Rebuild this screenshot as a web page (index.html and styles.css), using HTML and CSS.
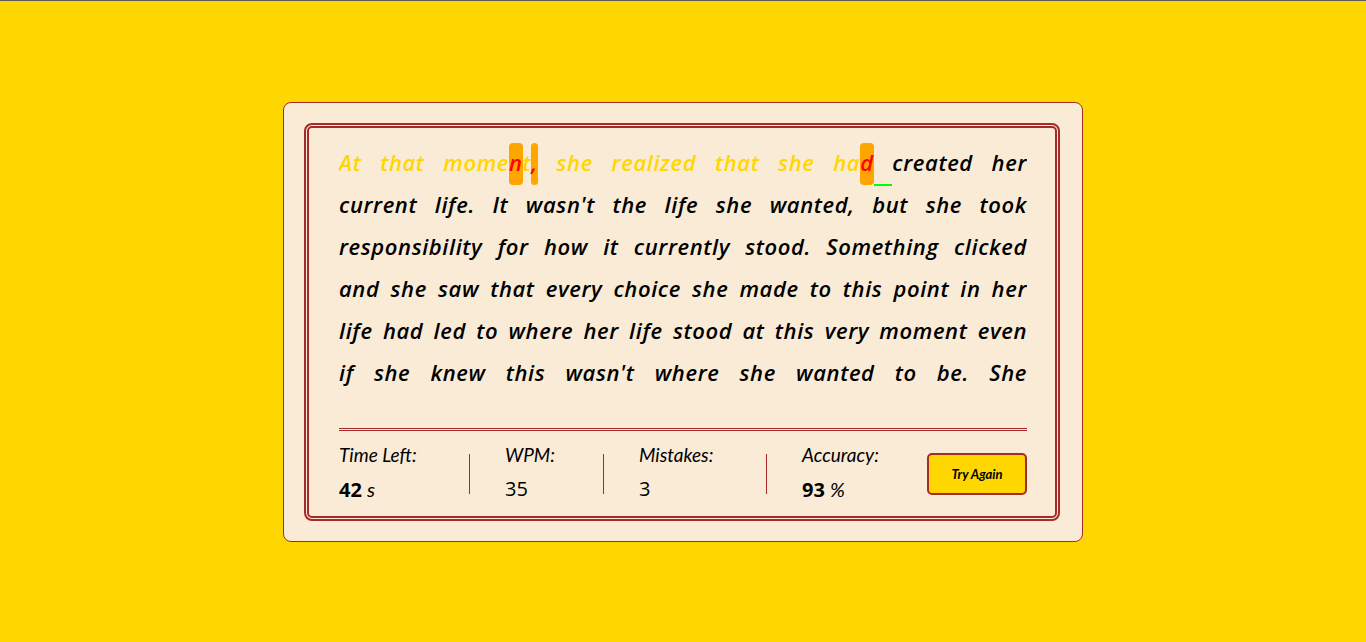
FILE: index.html
```html
<!DOCTYPE html>
<html lang="en">
<head>
<meta charset="utf-8">
<title>Typing Test</title>
<link rel="stylesheet" href="styles.css">
</head>
<body>
<div class="card">
  <div class="board">
    <div class="typing-text"><p><span class="ok">At that mome</span><span class="bad">n</span><span class="ok">t</span><span class="bad">,</span><span class="ok"> she realized that she ha</span><span class="bad">d</span><span class="active"> </span>created her current life. It wasn't the life she wanted, but she took responsibility for how it currently stood. Something clicked and she saw that every choice she made to this point in her life had led to where her life stood at this very moment even if she knew this wasn't where she wanted to be. She understood that if she wanted her life to change, she would have to be the one to change it, and that nobody else was going to do it for her.</p></div>
    <div class="stats">
      <div class="stat stat-time">
        <div class="label">Time Left:</div>
        <div class="value"><b>42</b> <i>s</i></div>
      </div>
      <div class="divider"></div>
      <div class="stat stat-wpm">
        <div class="label">WPM:</div>
        <div class="value">35</div>
      </div>
      <div class="divider"></div>
      <div class="stat stat-mistakes">
        <div class="label">Mistakes:</div>
        <div class="value">3</div>
      </div>
      <div class="divider"></div>
      <div class="stat stat-accuracy">
        <div class="label">Accuracy:</div>
        <div class="value"><b>93</b> <i>%</i></div>
      </div>
      <button class="retry">Try Again</button>
    </div>
  </div>
</div>
</body>
</html>
```
FILE: styles.css
```css
html, body {
  margin: 0;
  padding: 0;
}
body {
  height: 642px;
  box-sizing: border-box;
  border-top: 1px solid #5b5b5b;
  background: #ffd700;
  display: flex;
  align-items: center;
  justify-content: center;
  font-family: "Open Sans", sans-serif;
}
.card {
  width: 800px;
  box-sizing: border-box;
  background: #faebd7;
  border: 1px solid #a52a2a;
  border-radius: 8px;
  padding: 20px 22px 20px 20px;
}
.board {
  border: 5px double #a52a2a;
  border-radius: 8px;
  padding: 13px 28px 7px 30px;
}
.typing-text {
  height: 255px;
  overflow: hidden;
}
.typing-text p {
  margin: 0;
  font-family: "Open Sans", sans-serif;
  font-style: italic;
  font-weight: 600;
  font-size: 22px;
  line-height: 42px;
  letter-spacing: 0.6px;
  word-spacing: 3.5px;
  text-align: justify;
  color: #000;
}
.ok {
  color: #ffd700;
}
.bad {
  color: #ff0000;
  background: #ffa500;
  border-radius: 4px;
  padding: 3.5px 0 8.5px;
}
.active {
  padding-bottom: 7px;
  border-bottom: 2px solid #00ff00;
}
.stats {
  margin-top: 32px;
  border-top: 3px double #a52a2a;
  padding-top: 7px;
  padding-bottom: 2px;
  display: flex;
  align-items: center;
}
.stat {
  flex: none;
}
.stat-time { width: 130px; }
.stat-wpm { width: 98px; margin-left: 35px; }
.stat-mistakes { width: 127px; margin-left: 35px; }
.stat-accuracy { margin-left: 35px; }
.label {
  font-family: Lato, sans-serif;
  font-style: italic;
  font-size: 19px;
  line-height: 34px;
  color: #000;
}
.value {
  font-family: "Open Sans", sans-serif;
  font-size: 20px;
  line-height: 34px;
  color: #000;
}
.value b {
  font-weight: 700;
}
.value i {
  font-family: Lato, sans-serif;
  font-style: italic;
}
.divider {
  flex: none;
  width: 1px;
  height: 40px;
  margin-top: 4px;
  background: #a52a2a;
}
.retry {
  margin-left: auto;
  margin-top: 4px;
  width: 100px;
  height: 42px;
  box-sizing: border-box;
  background: #ffd700;
  border: 2px solid #a52a2a;
  border-radius: 5px;
  font-family: Lato, sans-serif;
  font-style: italic;
  font-weight: 700;
  font-size: 13px;
  color: #000;
  cursor: pointer;
}
```
